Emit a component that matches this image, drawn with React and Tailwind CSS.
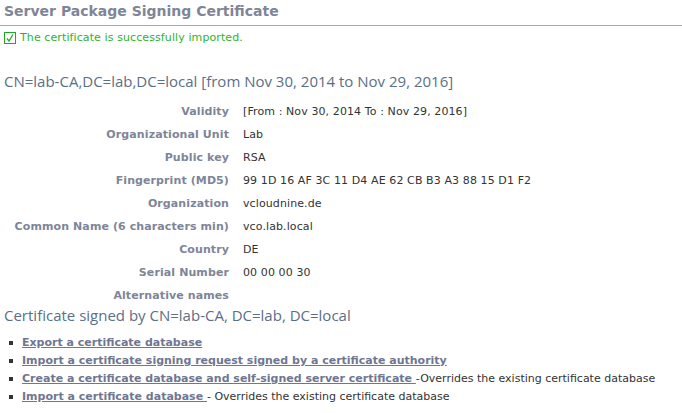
import React from "react";

const rows = [
  ["Validity", "[From : Nov 30, 2014 To : Nov 29, 2016]"],
  ["Organizational Unit", "Lab"],
  ["Public key", "RSA"],
  ["Fingerprint (MD5)", "99 1D 16 AF 3C 11 D4 AE 62 CB B3 A3 88 15 D1 F2"],
  ["Organization", "vcloudnine.de"],
  ["Common Name (6 characters min)", "vco.lab.local"],
  ["Country", "DE"],
  ["Serial Number", "00 00 00 30"],
  ["Alternative names", ""],
];

const actions = [
  { link: "Export a certificate database", note: "" },
  { link: "Import a certificate signing request signed by a certificate authority", note: "" },
  { link: "Create a certificate database and self-signed server certificate\u00a0", note: "-Overrides the existing certificate database" },
  { link: "Import a certificate database\u00a0", note: "- Overrides the existing certificate database" },
];

const App = () => {
  return (
    <div className="w-[682px] h-[413px] bg-white overflow-hidden font-['DejaVu_Sans',Verdana,sans-serif]">
      <div className="border-b border-[#a9a9a9] h-[26px] px-[4px] pt-[1px]">
        <h1 className="text-[14px] font-bold text-[#7f8598] leading-[20px]">
          Server Package Signing Certificate
        </h1>
      </div>

      <div className="flex items-center gap-[4px] px-[4px] mt-[5px] h-[14px]">
        <span className="w-[12px] h-[12px] border border-[#22a922] flex items-center justify-center">
          <svg width="8" height="8" viewBox="0 0 8 8">
            <path d="M1 4.5 L3 7 L7 0.5" fill="none" stroke="#22a922" strokeWidth="1.3" />
          </svg>
        </span>
        <p className="text-[11px] text-[#2bb52b] leading-[14px] tracking-[0.1px]">The certificate is successfully imported.</p>
      </div>

      <p className="px-[4px] mt-[26px] text-[15px] leading-[20px] text-[#5a6f87] font-['Open_Sans',sans-serif]">
        CN=lab-CA,DC=lab,DC=local [from Nov 30, 2014 to Nov 29, 2016]
      </p>

      <div className="grid grid-cols-[229px_1fr] gap-x-[14px] mt-[9px] text-[11px] tracking-[0.1px]">
        {rows.map((row, index) => (
          <React.Fragment key={index}>
            <div className="text-right font-bold text-[#7e8598] leading-[23px] h-[23px]">{row[0]}</div>
            <div className="text-[#333333] leading-[23px] h-[23px]">{row[1]}</div>
          </React.Fragment>
        ))}
      </div>

      <p className="px-[4px] -mt-[2px] text-[15px] leading-[20px] text-[#5a6f87] font-['Open_Sans',sans-serif]">
        Certificate signed by CN=lab-CA, DC=lab, DC=local
      </p>

      <ul className="mt-[9px] text-[11px]">
        {actions.map((item, index) => (
          <li key={index} className="flex items-center h-[18px] pl-[9px]">
            <span className="w-[4px] h-[4px] bg-[#333] mr-[9px] shrink-0"></span>
            <span className="whitespace-pre">
              <a href="#" className="font-bold text-[#6f7692] underline">{item.link}</a>
              {item.note ? <span className="text-[#333333]">{item.note}</span> : null}
            </span>
          </li>
        ))}
      </ul>
    </div>
  );
};

export default App;
